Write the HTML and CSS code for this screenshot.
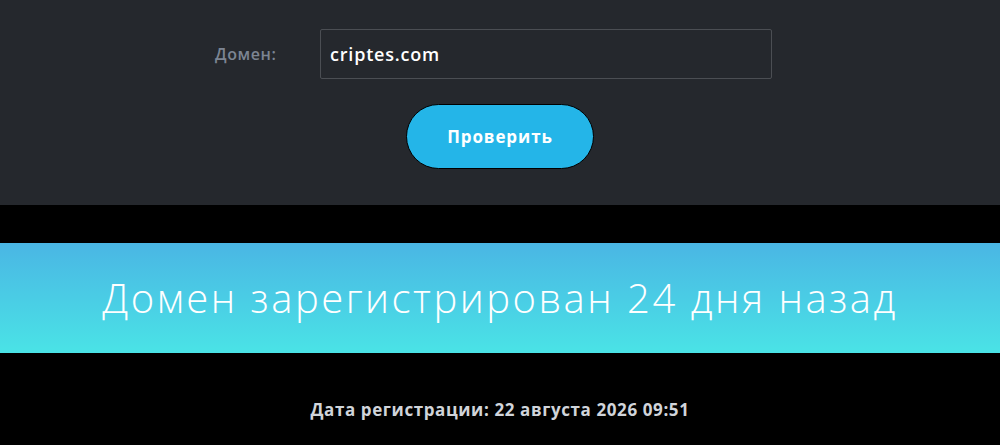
FILE: index.html
```html
<!DOCTYPE html>
<html lang="ru">
<head>
<meta charset="utf-8">
<link rel="stylesheet" href="styles.css">
</head>
<body>
<section class="form">
  <div class="row">
    <label class="label">Домен:</label>
    <div class="input">criptes.com</div>
  </div>
  <button class="btn">Проверить</button>
</section>
<div class="gap"></div>
<section class="banner">Домен зарегистрирован 24 дня назад</section>
<section class="info">Дата регистрации: 22 августа 2026 09:51</section>
</body>
</html>
```
FILE: styles.css
```css
* { box-sizing: border-box; }
html, body { margin: 0; padding: 0; background: #000; }
body { font-family: "Open Sans", "DejaVu Sans", sans-serif; width: 1000px; height: 445px; overflow: hidden; }
.form { background: #25282d; height: 205px; padding-top: 29px; display: flex; flex-direction: column; align-items: center; }
.row { display: flex; align-items: center; width: 1000px; }
.label { width: 320px; padding-left: 215px; color: #7c8593; font-size: 16px; font-weight: 600; letter-spacing: 0.6px; }
.input { width: 452px; height: 50px; border: 1px solid #4b4e53; border-radius: 2px; padding-left: 9px; display: flex; align-items: center; color: #fff; font-size: 18px; font-weight: 600; letter-spacing: 0.8px; }
.btn { margin-top: 25px; width: 188px; height: 65px; border-radius: 33px; border: 1px solid #000; background: #24b5e8; color: #fff; font-family: inherit; font-size: 17px; font-weight: 700; letter-spacing: 0.9px; }
.gap { height: 38px; background: #000; }
.banner { height: 110px; background: linear-gradient(#4ab6e4, #4ae3e6); color: #fff; display: flex; align-items: center; justify-content: center; font-size: 40px; font-weight: 300; letter-spacing: 2.5px; padding-bottom: 2px; }
.info { text-align: center; color: #d0d4da; font-size: 17px; font-weight: 700; letter-spacing: 0.6px; padding-top: 45px; }
```
